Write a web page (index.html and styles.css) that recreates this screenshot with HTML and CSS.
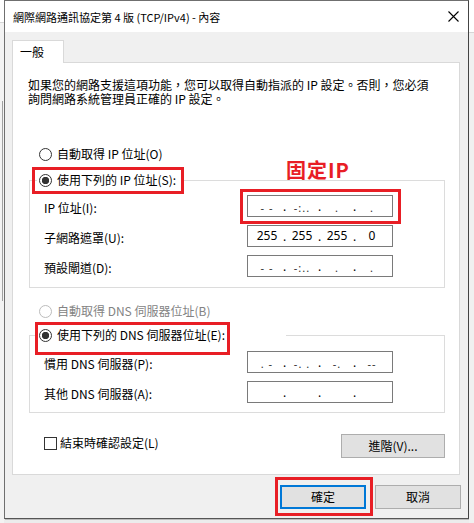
FILE: index.html
```html
<!DOCTYPE html>
<html lang="zh-Hant">
<head>
<meta charset="utf-8">
<title>網際網路通訊協定第 4 版 (TCP/IPv4) - 內容</title>
<link rel="stylesheet" href="styles.css">
</head>
<body>
<div class="desk">
  <div class="bg-left"><div class="bg-top"></div><div class="bg-line"></div></div>
  <div class="win">
    <div class="titlebar">
      <span class="title">網際網路通訊協定第 4 版 (TCP/IPv4) - 內容</span>
      <svg class="close" width="11" height="11" viewBox="0 0 11 11" aria-hidden="true">
        <path d="M0.5 0.5 L10.5 10.5 M10.5 0.5 L0.5 10.5" stroke="#000" stroke-width="1.1" fill="none"/>
      </svg>
    </div>
    <div class="winbody">
      <div class="tabs"><div class="tab">一般</div></div>
      <div class="panel">
        <p class="intro"><span class="intro-line">如果您的網路支援這項功能，您可以取得自動指派的 IP 設定。否則，您必須</span><span class="intro-line">詢問網路系統管理員正確的 IP 設定。</span></p>

        <div class="radio-row r-auto-ip"><span class="radio"></span><span>自動取得 IP 位址(O)</span></div>

        <fieldset class="group g-ip">
          <legend class="legend l-ip"><span class="radio on"></span><span>使用下列的 IP 位址(S):</span></legend>
          <div class="field-row">
            <span class="label">IP 位址(I):</span>
            <div class="ipbox"><span class="oct mask">- -</span><span class="dot">.</span><span class="oct mask">-:..</span><span class="dot">.</span><span class="oct mask">.</span><span class="dot">.</span><span class="oct mask">.</span></div>
          </div>
          <div class="field-row">
            <span class="label">子網路遮罩(U):</span>
            <div class="ipbox"><span class="oct">255</span><span class="dot">.</span><span class="oct">255</span><span class="dot">.</span><span class="oct">255</span><span class="dot">.</span><span class="oct">0</span></div>
          </div>
          <div class="field-row">
            <span class="label">預設閘道(D):</span>
            <div class="ipbox"><span class="oct mask">- -</span><span class="dot">.</span><span class="oct mask">-:..</span><span class="dot">.</span><span class="oct mask">.</span><span class="dot">.</span><span class="oct mask">.</span></div>
          </div>
        </fieldset>

        <div class="radio-row r-auto-dns disabled"><span class="radio"></span><span>自動取得 DNS 伺服器位址(B)</span></div>

        <fieldset class="group g-dns">
          <legend class="legend l-dns"><span class="radio on"></span><span>使用下列的 DNS 伺服器位址(E):</span></legend>
          <div class="field-row">
            <span class="label">慣用 DNS 伺服器(P):</span>
            <div class="ipbox"><span class="oct mask">. -</span><span class="dot">.</span><span class="oct mask">-. .</span><span class="dot">.</span><span class="oct mask">-.</span><span class="dot">.</span><span class="oct mask">--</span></div>
          </div>
          <div class="field-row">
            <span class="label">其他 DNS 伺服器(A):</span>
            <div class="ipbox"><span class="oct"></span><span class="dot">.</span><span class="oct"></span><span class="dot">.</span><span class="oct"></span><span class="dot">.</span><span class="oct"></span></div>
          </div>
        </fieldset>

        <div class="bottom-row">
          <span class="check"><span class="checkbox"></span><span>結束時確認設定(L)</span></span>
          <button class="btn adv" type="button">進階(V)...</button>
        </div>

        <span class="mark mark-ip-radio"></span>
        <span class="mark mark-ip-input"></span>
        <span class="mark mark-dns-radio"></span>
        <span class="note">固定IP</span>
      </div>
      <div class="actions">
        <span class="ok-wrap"><button class="btn ok" type="button">確定</button><span class="mark mark-ok"></span></span>
        <button class="btn" type="button">取消</button>
      </div>
    </div>
  </div>
  <div class="bg-right"><div class="bg-top-r"></div></div>
</div>
</body>
</html>
```

FILE: styles.css
```css
html, body {
  margin: 0;
  padding: 0;
}

body {
  width: 474px;
  height: 523px;
  overflow: hidden;
  background: #ececec;
  font-family: "Noto Sans CJK TC", "Noto Sans", sans-serif;
  font-size: 12px;
  color: #000;
}

.desk {
  display: flex;
  height: 523px;
}

.bg-left {
  width: 4px;
  flex: none;
  background: #f3f3f3;
  display: flex;
  flex-direction: column;
}

.bg-top {
  height: 22px;
  background: #fff;
  border-bottom: 1px solid #d6d6d6;
}

.bg-line {
  margin: 78px 0 0 2px;
  width: 1px;
  height: 200px;
  background: #a0a0a0;
}

.bg-right {
  flex: 1;
  background: #f0f0f0;
}

.bg-top-r {
  height: 32px;
  background: #fff;
  border-bottom: 1px solid #d6d6d6;
}

.win {
  width: 465px;
  height: 519px;
  flex: none;
  box-sizing: border-box;
  border: 1px solid #6f6f6f;
  border-right-color: #444;
  border-bottom-color: #555;
  background: #f0f0f0;
  display: flex;
  flex-direction: column;
  box-shadow: 1px 1px 0 rgba(0, 0, 0, 0.2);
}

.titlebar {
  height: 31px;
  flex: none;
  background: #fff;
  display: flex;
  align-items: center;
  justify-content: space-between;
  padding: 0 9px 0 8px;
}

.title {
  font-size: 11px;
  line-height: 14px;
  white-space: nowrap;
}

.close {
  display: block;
}

.winbody {
  flex: 1;
  padding: 8px 7px 0 7px;
  display: flex;
  flex-direction: column;
}

.tabs {
  display: flex;
}

.tab {
  position: relative;
  z-index: 1;
  width: 52px;
  height: 23px;
  box-sizing: border-box;
  margin-bottom: -1px;
  padding-left: 7px;
  border: 1px solid #d9d9d9;
  border-bottom: none;
  background: #fff;
  display: flex;
  align-items: center;
  line-height: 14px;
}

.panel {
  position: relative;
  width: 448px;
  height: 413px;
  box-sizing: border-box;
  border: 1px solid #d9d9d9;
  background: #fff;
  padding: 0 14px 0 16px;
}

.intro {
  margin: 15px 0 0 -1px;
  white-space: nowrap;
}

.intro-line {
  display: block;
  height: 14px;
  line-height: 14px;
}

.radio-row {
  display: flex;
  align-items: center;
  gap: 5px;
  height: 16px;
  padding-left: 10px;
  line-height: 14px;
}

.r-auto-ip {
  margin-top: 40px;
}

.r-auto-dns {
  margin-top: 15px;
}

.disabled {
  color: #838383;
}

.radio {
  width: 13px;
  height: 13px;
  flex: none;
  box-sizing: border-box;
  border: 1px solid #333;
  border-radius: 50%;
  background: #fff;
}

.radio.on {
  background: radial-gradient(circle, #333 0 3.4px, #fff 4px);
}

.disabled .radio {
  border-color: #bcbcbc;
}

.group {
  width: 416px;
  box-sizing: border-box;
  min-width: 0;
  margin: 0;
  border: 1px solid #dcdcdc;
  padding: 7px 8px 10px 7px;
}

.g-ip {
  margin-top: 10px;
}

.g-dns {
  margin-top: 8px;
  padding-top: 8px;
  padding-bottom: 9px;
}

.legend {
  display: flex;
  align-items: center;
  gap: 5px;
  height: 16px;
  box-sizing: border-box;
  padding: 0 0 0 2px;
  line-height: 14px;
  white-space: nowrap;
}

.l-ip {
  width: 146px;
}

.l-dns {
  width: 249px;
}

.field-row {
  display: flex;
  align-items: center;
  height: 22px;
  padding-left: 7px;
}

.field-row + .field-row {
  margin-top: 8px;
}

.label {
  width: 203px;
  flex: none;
  line-height: 14px;
  margin-top: 3px;
}

.ipbox {
  width: 146px;
  height: 22px;
  box-sizing: border-box;
  border: 1px solid #7a7a7a;
  background: #fff;
  display: flex;
  align-items: center;
  padding-left: 4px;
  font-family: "Noto Sans", "DejaVu Sans", sans-serif;
  font-size: 12px;
  line-height: 14px;
}

.oct {
  width: 30px;
  text-align: center;
  white-space: pre;
}

.oct.mask {
  color: #333;
  font-size: 11px;
  letter-spacing: 1px;
  margin-top: 3px;
}

.dot {
  width: 5px;
  text-align: center;
  margin-top: 1px;
}

.bottom-row {
  width: 416px;
  box-sizing: border-box;
  margin-top: 21px;
  padding-left: 15px;
  display: flex;
  align-items: flex-start;
  justify-content: space-between;
}

.check {
  display: flex;
  align-items: center;
  gap: 3px;
  height: 16px;
  margin-top: 1px;
  line-height: 14px;
}

.checkbox {
  width: 13px;
  height: 13px;
  box-sizing: border-box;
  border: 1px solid #333;
  background: #fff;
  flex: none;
}

.btn {
  font: inherit;
  line-height: 14px;
  color: #000;
  height: 24px;
  width: 86px;
  box-sizing: border-box;
  border: 1px solid #adadad;
  background: #e1e1e1;
  padding: 0;
  margin: 0;
  border-radius: 0;
}

.btn.adv {
  width: 104px;
}

.btn.ok {
  border: 2px solid #0078d7;
  display: block;
}

.actions {
  margin-top: 10px;
  display: flex;
  justify-content: flex-end;
  gap: 9px;
}

.ok-wrap {
  position: relative;
  display: block;
}

.mark {
  position: absolute;
  box-sizing: border-box;
  border: 3px solid #e81e25;
  pointer-events: none;
}

.mark-ip-radio {
  left: 19px;
  top: 104px;
  width: 152px;
  height: 27px;
}

.mark-ip-input {
  left: 227px;
  top: 126px;
  width: 161px;
  height: 35px;
}

.mark-dns-radio {
  left: 22px;
  top: 259px;
  width: 195px;
  height: 33px;
}

.mark-ok {
  left: -5px;
  top: -8px;
  width: 98px;
  height: 39px;
}

.note {
  position: absolute;
  left: 273px;
  top: 95px;
  color: #e81e25;
  font-weight: 700;
  font-size: 20px;
  line-height: 24px;
  letter-spacing: 1px;
  white-space: nowrap;
}
```
